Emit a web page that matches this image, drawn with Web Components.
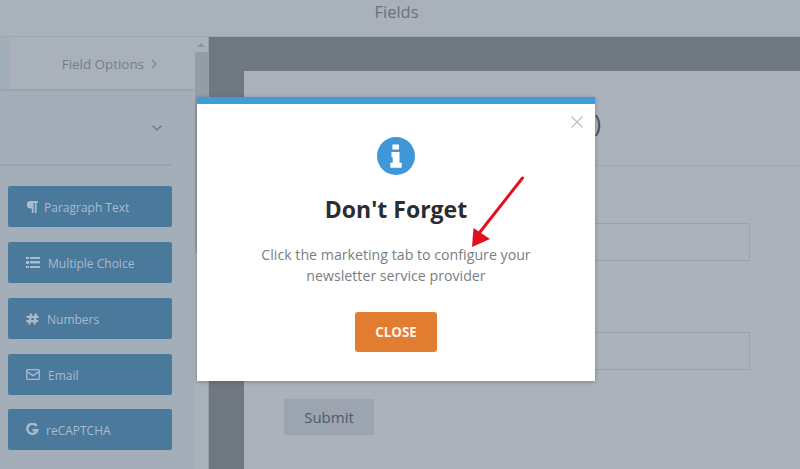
<!DOCTYPE html>
<html>
<head>
<meta charset="utf-8">
<title>Fields</title>
<style>
html, body { margin: 0; padding: 0; height: 469px; overflow: hidden; }
body { font-family: "Open Sans", "Noto Sans", sans-serif; background: #a9b1bb; position: relative; }
</style>
</head>
<body>
<app-page>
    <top-bar slot="top">Fields</top-bar>
    <side-bar slot="side">
        <field-button icon="para">Paragraph Text</field-button>
        <field-button icon="list">Multiple Choice</field-button>
        <field-button icon="hash">Numbers</field-button>
        <field-button icon="mail">Email</field-button>
        <field-button icon="google" style="margin-top: -1px">reCAPTCHA</field-button>
    </side-bar>
    <form-canvas slot="main"></form-canvas>
</app-page>
<info-modal>
    <span slot="title">Don't Forget</span>
    Click the marketing tab to configure your<br>newsletter service provider
</info-modal>

<script>
// contenedor general
class AppPage extends HTMLElement {
    constructor() {
        super();
        this.attachShadow({ mode: "open" });
        this.shadowRoot.innerHTML = `
            <style>
            :host { display: flex; flex-direction: column; height: 469px; }
            .body { display: flex; flex: 1; min-height: 0; }
            </style>
            <slot name="top"></slot>
            <div class="body">
                <slot name="side"></slot>
                <slot name="main"></slot>
            </div>
        `;
    }
}
customElements.define("app-page", AppPage);

class TopBar extends HTMLElement {
    constructor() {
        super();
        this.attachShadow({ mode: "open" });
        this.shadowRoot.innerHTML = `
            <style>
            :host {
                display: block;
                box-sizing: border-box;
                height: 37px;
                padding: 1px 7px 0 0;
                text-align: center;
                font-size: 16.500px;
                line-height: 22px;
                color: #68717c;
                background: #a9b1bb;
                border-bottom: 1px solid #9fa8b2;
            }
            </style>
            <slot></slot>
        `;
    }
}
customElements.define("top-bar", TopBar);

class SideBar extends HTMLElement {
    constructor() {
        super();
        this.attachShadow({ mode: "open" });
        this.shadowRoot.innerHTML = `
            <style>
            :host { display: flex; width: 209px; flex: none; background: #a3aeb9; }
            .col { width: 194px; flex: none; }
            .tabs {
                display: flex;
                height: 54px;
                box-sizing: border-box;
                border-bottom: 2px solid #99a4af;
            }
            .tab-a { width: 10px; background: #a1afbb; }
            .tab-b {
                flex: 1;
                background: #a9b1bb;
                display: flex;
                align-items: center;
                justify-content: flex-end;
                gap: 7px;
                padding: 2px 37px 0 0;
                font-size: 13.400px;
                color: #737e8b;
            }
            .acc {
                height: 75px;
                width: 172px;
                box-sizing: border-box;
                border-bottom: 2px solid #99a4af;
                display: flex;
                align-items: center;
                justify-content: flex-end;
                padding: 0 10px 0 0;
            }
            .list {
                display: flex;
                flex-direction: column;
                gap: 15px;
                width: 164px;
                padding: 20px 0 0 8px;
            }
            .bar {
                width: 15px;
                flex: none;
                background: #a9b1bb;
                display: flex;
                flex-direction: column;
                align-items: center;
                box-sizing: border-box;
                border-right: 1px solid #98a1ab;
            }
            .up { margin-top: 6px; width: 0; height: 0; border: 4px solid transparent; border-bottom: 4px solid #8b95a0; border-top: 0; }
            .thumb { width: 13px; height: 201px; margin-top: 5px; background: #929da7; }
            </style>
            <div class="col">
                <div class="tabs">
                    <div class="tab-a"></div>
                    <div class="tab-b">Field Options
                        <svg width="6" height="10" viewBox="0 0 6 10" fill="none" stroke="#737e8b" stroke-width="1.2"><path d="M1 .8 5 5 1 9.2"/></svg>
                    </div>
                </div>
                <div class="acc">
                    <svg width="10" height="6" viewBox="0 0 10 6" fill="none" stroke="#68727e" stroke-width="1.2"><path d="M.6.8 5 5 9.4.8"/></svg>
                </div>
                <div class="list"><slot></slot></div>
            </div>
            <div class="bar">
                <div class="up"></div>
                <div class="thumb"></div>
            </div>
        `;
    }
}
customElements.define("side-bar", SideBar);

const ICONOS = {
    para: `<svg width="13" height="12" viewBox="0 0 13 12" fill="#a8bccd"><path d="M4.500 0H12v2h-1.400v10H8.800V2H7.600v10H5.800V7.400H4.500A3.700 3.700 0 0 1 4.500 0z"/></svg>`,
    list: `<svg width="14" height="11" viewBox="0 0 14 11" fill="#a8bccd"><path d="M0 0h3v2H0zM4 0h10v2H4zM0 4h3v3H0zM4 4h10v2.500H4zM0 9h3v2H0zM4 9h10v2H4z"/></svg>`,
    hash: `<svg width="13" height="12" viewBox="0 0 13 12" fill="none" stroke="#a8bccd" stroke-width="2.200"><path d="M5 .5 3.300 11.500M10 .5 8.300 11.500M.6 3.900h12M.2 8.100h12"/></svg>`,
    mail: `<svg width="14" height="11" viewBox="0 0 14 11" fill="none" stroke="#a8bccd" stroke-width="1.300"><rect x=".7" y=".7" width="12.600" height="9.600" rx="1"/><path d="M.9 2.600 7 6.600l6.100-4"/></svg>`,
    google: `<svg width="13" height="13" viewBox="0 0 13 13" fill="none" stroke="#a8bccd" stroke-width="2.400"><path d="M10.600 2.900A5.100 5.100 0 1 0 11.300 7.200H6.600"/></svg>`
};

// boton de la lista de campos
class FieldButton extends HTMLElement {
    constructor() {
        super();
        this.attachShadow({ mode: "open" });
    }
    connectedCallback() {
        const icono = this.getAttribute("icon");
        const gap = icono === "para" ? 5 : icono === "google" ? 7 : 8;
        this.shadowRoot.innerHTML = `
            <style>
            :host {
                display: flex;
                align-items: center;
                gap: ${gap}px;
                box-sizing: border-box;
                height: 41px;
                padding: 0 0 0 18px;
                background: #4a799c;
                border-radius: 2px;
                font-size: 12px;
                color: #a8bccd;
            }
            svg { display: block; flex: none; }
            span { padding-top: 2px; }
            </style>
            ${ICONOS[icono]}
            <span><slot></slot></span>
        `;
    }
}
customElements.define("field-button", FieldButton);

class FormCanvas extends HTMLElement {
    constructor() {
        super();
        this.attachShadow({ mode: "open" });
        this.shadowRoot.innerHTML = `
            <style>
            :host {
                display: block;
                flex: 1;
                box-sizing: border-box;
                padding: 34px 0 0 35px;
                background: #6f7780;
                overflow: hidden;
            }
            .panel { background: #abb2bc; height: 400px; }
            .head {
                height: 95px;
                box-sizing: border-box;
                border-bottom: 1px solid #a0a8b2;
                padding: 36px 0 0 350px;
                font-size: 24px;
                line-height: 32px;
                color: #49505a;
            }
            .body { padding: 57px 50px 0 40px; display: flex; flex-direction: column; }
            .input { height: 38px; box-sizing: border-box; border: 1px solid #9aa2ad; background: #abb2bc; }
            .input + .input { margin-top: 71px; }
            button {
                width: 90px;
                height: 36px;
                margin-top: 29px;
                border: 0;
                padding: 0;
                background: #9ba4af;
                font: 15px "Open Sans", "Noto Sans", sans-serif;
                color: #505a68;
            }
            </style>
            <div class="panel">
                <div class="head">)</div>
                <div class="body">
                    <div class="input"></div>
                    <div class="input"></div>
                    <div><button>Submit</button></div>
                </div>
            </div>
        `;
    }
}
customElements.define("form-canvas", FormCanvas);

class InfoModal extends HTMLElement {
    constructor() {
        super();
        this.attachShadow({ mode: "open" });
        this.shadowRoot.innerHTML = `
            <style>
            :host { display: block; position: absolute; left: 197px; top: 97px; width: 398px; height: 284px; }
            .box {
                box-sizing: border-box;
                height: 284px;
                background: #fff;
                border-top: 7px solid #3f9bd9;
                box-shadow: 0 1px 4px rgba(60, 70, 80, .45);
                display: flex;
                flex-direction: column;
                align-items: center;
                padding: 33px 0 0;
            }
            .close { position: absolute; right: 12px; top: 19px; }
            h2 {
                margin: 19px 0 0;
                font-size: 23px;
                line-height: 30px;
                font-weight: 700;
                color: #2b2d30;
            }
            p {
                margin: 20px 0 0;
                font-size: 14.200px;
                line-height: 21px;
                text-align: center;
                color: #7a7e83;
            }
            button {
                margin-top: 26px;
                width: 82px;
                height: 40px;
                border: 0;
                padding: 0;
                border-radius: 3px;
                background: #e27c30;
                color: #fdf3e8;
                font: 700 13.400px "Open Sans", "Noto Sans", sans-serif;
            }
            .arrow { position: absolute; left: 268px; top: 73px; overflow: visible; }
            </style>
            <div class="box">
                <svg class="close" width="12" height="12" viewBox="0 0 12 12" stroke="#bcbfc2" stroke-width="1.200"><path d="M.5.5l11 11M11.500.5l-11 11"/></svg>
                <svg width="38" height="38" viewBox="0 0 38 38">
                    <circle cx="19" cy="19" r="19" fill="#3f97d8"/>
                    <path fill="#fff" d="M15.400 7.500h6.600v5h-6.600zM14.500 15h8v10.800h2.200v5H13.300v-5h2.400v-5.800h-1.200z"/>
                </svg>
                <h2><slot name="title"></slot></h2>
                <p><slot></slot></p>
                <button>CLOSE</button>
            </div>
            <svg class="arrow" width="60" height="80" viewBox="0 0 60 80">
                <path d="M57.500 8 15 62" stroke="#e2101c" stroke-width="3" stroke-linecap="round" fill="none"/>
                <path d="M7 77 8.500 58 25 69z" fill="#e2101c"/>
            </svg>
        `;
    }
}
customElements.define("info-modal", InfoModal);
</script>
</body>
</html>
